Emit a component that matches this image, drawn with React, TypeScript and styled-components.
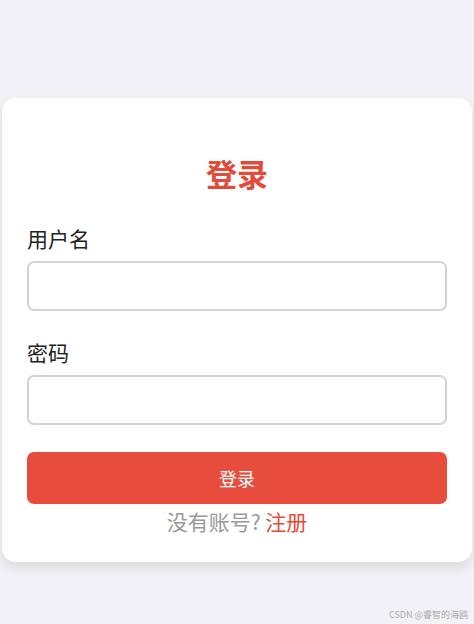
import React from 'react';
import { styled, createGlobalStyle } from 'styled-components';

const GlobalStyle = createGlobalStyle`
  html, body {
    margin: 0;
    padding: 0;
    background: #f2f2f7;
    font-family: "Noto Sans CJK SC", "Noto Sans", sans-serif;
  }
  * {
    box-sizing: border-box;
  }
`;

const Page = styled.div`
  min-height: 624px;
  padding: 98px 2px 0;
  display: flex;
  flex-direction: column;
`;

const Card = styled.form`
  background: #fff;
  border-radius: 14px;
  padding: 56px 25px 27px;
  display: flex;
  flex-direction: column;
  box-shadow: 0 6px 14px rgba(0, 0, 0, 0.1);
`;

const Title = styled.h1`
  margin: 0 0 32px;
  text-align: center;
  font-size: 31px;
  line-height: 38px;
  font-weight: 700;
  color: #e24a39;
`;

const Field = styled.label<{ $gap?: number }>`
  display: flex;
  flex-direction: column;
  gap: 8px;
  margin-bottom: ${(p) => p.$gap ?? 0}px;
`;

const LabelText = styled.span`
  font-size: 21px;
  line-height: 29px;
  color: #222;
`;

const Input = styled.input`
  height: 50px;
  width: 100%;
  border: 2px solid #d3d3d3;
  border-radius: 7px;
  padding: 0 12px;
  font-size: 18px;
  outline: none;
  background: #fff;
`;

const Submit = styled.button`
  margin-top: 27px;
  height: 52px;
  border: none;
  border-radius: 7px;
  background: #e74c3c;
  color: #fff;
  font-family: inherit;
  font-size: 18px;
  cursor: pointer;
`;

const Footer = styled.p`
  margin: 3px 0 0;
  text-align: center;
  font-size: 21px;
  line-height: 28px;
  color: #999;
`;

const RegisterLink = styled.a`
  color: #e24a39;
  text-decoration: none;
`;

const Mark = styled.div`
  margin-top: auto;
  padding: 0 4px 2px 0;
  text-align: right;
  font-size: 9px;
  line-height: 14px;
  color: #aaa;
`;

const App = () => {
  return (
    <>
      <GlobalStyle />
      <Page>
        <Card onSubmit={(e) => e.preventDefault()}>
          <Title>登录</Title>
          <Field $gap={27}>
            <LabelText>用户名</LabelText>
            <Input type="text" />
          </Field>
          <Field>
            <LabelText>密码</LabelText>
            <Input type="password" />
          </Field>
          <Submit type="submit">登录</Submit>
          <Footer>
            没有账号? <RegisterLink href="#">注册</RegisterLink>
          </Footer>
        </Card>
        <Mark>CSDN @睿智的海鸥</Mark>
      </Page>
    </>
  );
};

export default App;
